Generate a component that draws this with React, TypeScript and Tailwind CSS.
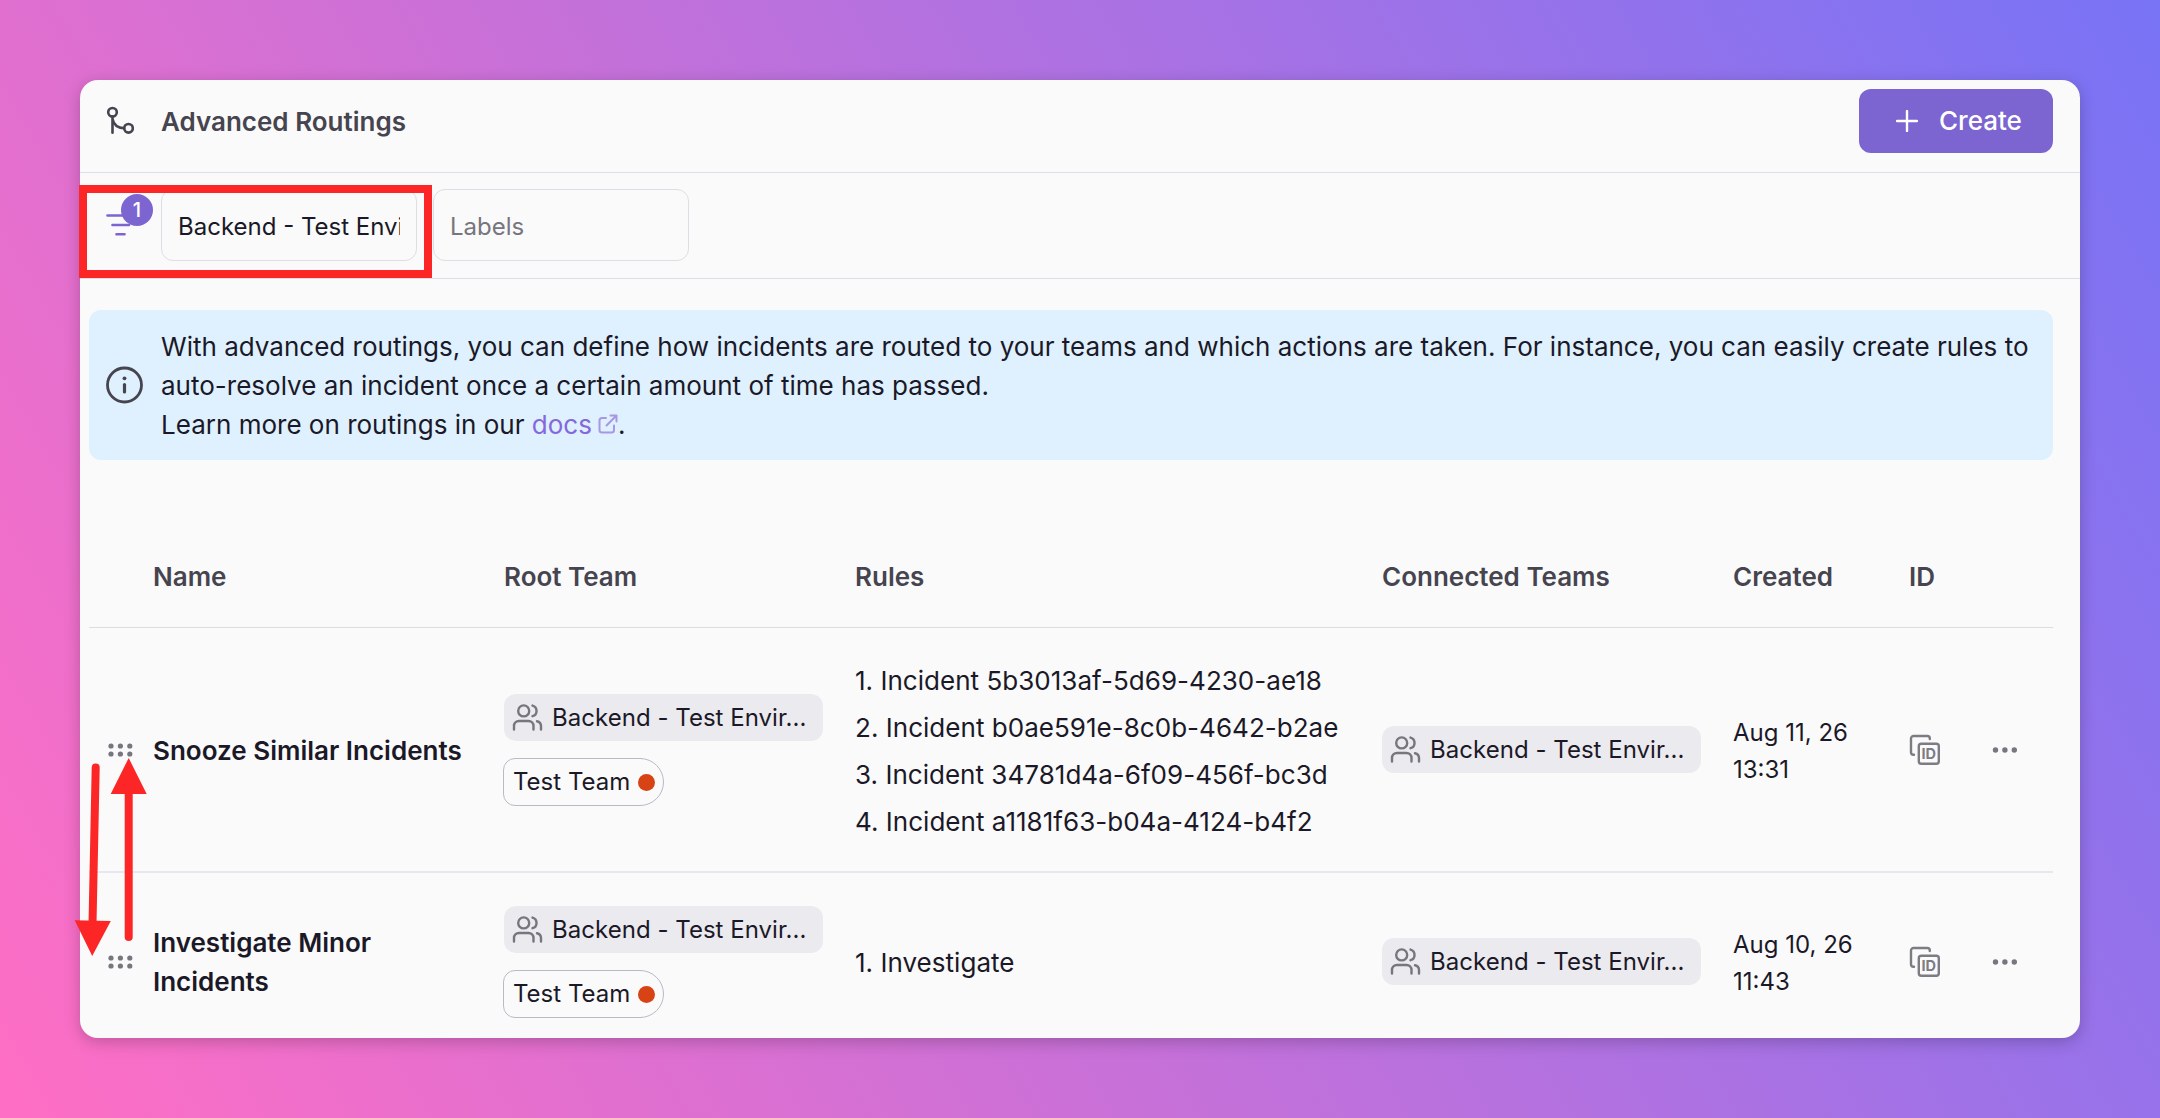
import type { ReactNode } from 'react';

type Routing = {
  name: string;
  rules: string[];
  date: string;
  time: string;
};

const routings: Routing[] = [
  {
    name: 'Snooze Similar Incidents',
    rules: [
      'Incident 5b3013af-5d69-4230-ae18',
      'Incident b0ae591e-8c0b-4642-b2ae',
      'Incident 34781d4a-6f09-456f-bc3d',
      'Incident a1181f63-b04a-4124-b4f2',
    ],
    date: 'Aug 11, 26',
    time: '13:31',
  },
  {
    name: 'Investigate Minor Incidents',
    rules: ['Investigate'],
    date: 'Aug 10, 26',
    time: '11:43',
  },
];

const columns = 'grid grid-cols-[64px_351px_351px_527px_351px_176px_144px]';

function RouteIcon() {
  return (
    <svg width="28" height="32" viewBox="0 0 28 32" fill="none" stroke="#46444f" strokeWidth="2.6" strokeLinecap="round">
      <circle cx="6.5" cy="7.3" r="4.3" />
      <circle cx="22.5" cy="23.3" r="4.3" />
      <path d="M6.5 11.6v16.2M6.5 14c1 5.5 5 8.8 11.7 9.3" />
    </svg>
  );
}

function FilterIcon() {
  return (
    <svg width="32" height="32" viewBox="0 0 32 32" fill="none" stroke="#7c65d1" strokeWidth="2.6" strokeLinecap="round">
      <path d="M4.5 6.5h24M9.5 16h16.500M13.5 25.2h8" />
    </svg>
  );
}

function InfoIcon() {
  return (
    <svg width="38" height="38" viewBox="0 0 38 38" fill="none" stroke="#46444f" strokeLinecap="round">
      <circle cx="19.5" cy="19" r="17" strokeWidth="2.8" />
      <path d="M19.5 18.5v7.5" strokeWidth="3.2" />
      <circle cx="19.5" cy="12.3" r="1.9" fill="#46444f" stroke="none" />
    </svg>
  );
}

function ExternalIcon() {
  return (
    <svg className="ml-1.5 inline-block align-baseline" width="20" height="20" viewBox="0 0 20 20" fill="none" stroke="#a896e6" strokeWidth="2" strokeLinecap="round" strokeLinejoin="round">
      <path d="M8 4H4a2.5 2.5 0 0 0-2.5 2.5V16A2.5 2.5 0 0 0 4 18.5h9.5A2.5 2.5 0 0 0 16 16v-4.5M12.5 1.5h6v6M18.5 1.5L8.5 11.5" />
    </svg>
  );
}

function TeamIcon() {
  return (
    <svg className="shrink-0" width="32" height="32" viewBox="0 0 32 32" fill="none" stroke="#77757d" strokeWidth="2.4" strokeLinecap="round" strokeLinejoin="round">
      <circle cx="11.7" cy="8.9" r="5.5" />
      <path d="M2 27.5v-3.5a5 5 0 0 1 5-5h9.5a5 5 0 0 1 5 5v3.5" />
      <path d="M20.5 3.6a5.5 5.5 0 0 1 0 10.6" />
      <path d="M25 19.3a5 5 0 0 1 4 4.8v3.4" />
    </svg>
  );
}

function CopyIdIcon() {
  return (
    <svg width="32" height="32" viewBox="0 0 32 32" fill="none" stroke="#7d7b84" strokeWidth="2.4" strokeLinecap="round">
      <path d="M5 20.8H4.5A2.5 2.5 0 0 1 2 18.3V4.5A2.5 2.5 0 0 1 4.5 2h13.8a2.5 2.5 0 0 1 2.5 2.5v.5" />
      <rect x="9.8" y="9.8" width="20" height="20" rx="2.5" />
      <text x="19.8" y="25" textAnchor="middle" fontSize="14.5" fontWeight="700" fill="#7d7b84" stroke="none">
        ID
      </text>
    </svg>
  );
}

function DragHandle() {
  return (
    <svg width="26" height="16" viewBox="0 0 26 16" fill="#77757d">
      {[4, 13.4, 22.8].map((x) => (
        <g key={x}>
          <circle cx={x} cy="4" r="2.6" />
          <circle cx={x} cy="12" r="2.6" />
        </g>
      ))}
    </svg>
  );
}

function MoreIcon() {
  return (
    <svg width="26" height="8" viewBox="0 0 26 8" fill="#77757d">
      <circle cx="3.5" cy="4" r="2.7" />
      <circle cx="12.9" cy="4" r="2.7" />
      <circle cx="22.3" cy="4" r="2.7" />
    </svg>
  );
}

function TeamChip() {
  return (
    <div className="flex h-[47px] w-[319px] items-center gap-2 rounded-xl bg-[#ebeaef] pl-2 text-2xl tracking-[0.03px]">
      <TeamIcon />
      <span className="whitespace-nowrap pt-px">Backend - Test Envir...</span>
    </div>
  );
}

function LabelChip() {
  return (
    <div className="-ml-px flex h-12 w-[161px] items-center gap-2 rounded-[12px_24px_24px_12px] border border-[#bbb8c8] pl-[9px] text-2xl">
      <span className="whitespace-nowrap">Test Team</span>
      <span className="size-[17px] rounded-full bg-[#d84315]" />
    </div>
  );
}

function HeadCell({ children }: { children?: ReactNode }) {
  return <div className="text-[26px] font-semibold text-[#46444f]">{children}</div>;
}

// Two arrows that show rows swapping places
function SwapArrows() {
  return (
    <svg className="pointer-events-none absolute -left-[10px] top-[670px]" width="90" height="220" viewBox="0 0 90 220" fill="#fc2626" stroke="#fc2626">
      <path d="M25.7 17.5L22.5 174" strokeWidth="8" strokeLinecap="round" />
      <path d="M4.7 170.2L40.8 171L22.2 206z" stroke="none" />
      <path d="M58.7 187V40" strokeWidth="8" strokeLinecap="round" />
      <path d="M40.7 44H76.7L58.7 8z" stroke="none" />
    </svg>
  );
}

export default function App() {
  return (
    <main className="h-[1118px] w-[2160px] overflow-hidden bg-[linear-gradient(60deg,#ff6ec4,#7873f5)] p-20 font-[Inter,sans-serif] text-[26.03px] text-[#1b1928]">
      <div className="relative h-[958px] w-[2000px] rounded-[18px] bg-[#fafafa] shadow-[0_4px_16px_rgba(0,0,0,0.22)]">
        <header className="flex h-[93px] items-start justify-between border-b border-[#dfdee6] pl-[26px] pr-[27px] pt-[9px]">
          <div className="flex h-16 items-center gap-[27px]">
            <RouteIcon />
            <h1 className="text-[26px] font-semibold text-[#46444f]">Advanced Routings</h1>
          </div>
          <button className="flex h-16 w-[194px] items-center rounded-xl bg-[#7c65d1] pl-[37px] font-medium text-white">
            <svg width="22" height="22" viewBox="0 0 22 22" stroke="white" strokeWidth="2.4" strokeLinecap="round">
              <path d="M11 1v20M1 11h20" />
            </svg>
            <span className="ml-[21px]">Create</span>
          </button>
        </header>

        <div className="flex h-[106px] items-start border-b border-[#dfdee6] pl-[23px] pt-4">
          <div className="relative mt-5 w-[58px]">
            <FilterIcon />
            <span className="absolute -top-[15px] left-[18px] flex size-8 items-center justify-center rounded-full bg-[#7c65d1] text-xl font-medium text-white">
              1
            </span>
          </div>
          <div className="h-[72px] w-64 rounded-xl border border-[#dfdee6] px-4">
            <div className="overflow-hidden whitespace-nowrap text-2xl leading-[73px]">Backend - Test Envir</div>
          </div>
          <div className="ml-4 h-[72px] w-64 rounded-xl border border-[#dfdee6] px-4 text-2xl leading-[73px] text-[#77757d]">
            Labels
          </div>
        </div>
        <div className="absolute -left-px top-[105px] h-[93px] w-[353px] border-8 border-[#fc2626]" />

        <div className="pl-[9px] pr-[27px] pt-[31px]">
          <div className="flex h-[150px] items-center rounded-xl bg-[#dff1fe] pl-4">
            <InfoIcon />
            <p className="ml-[18px] whitespace-nowrap leading-[39px]">
              With advanced routings, you can define how incidents are routed to your teams and which actions are taken. For instance, you can easily create rules to
              <br />
              auto-resolve an incident once a certain amount of time has passed.
              <br />
              Learn more on routings in our <a className="text-[#8468dc]">docs<ExternalIcon /></a>.
            </p>
          </div>

          <div className={`${columns} mt-[65px] h-[103px] items-center border-b border-[#dddde0]`}>
            <HeadCell />
            <HeadCell>Name</HeadCell>
            <HeadCell>Root Team</HeadCell>
            <HeadCell>Rules</HeadCell>
            <HeadCell>Connected Teams</HeadCell>
            <HeadCell>Created</HeadCell>
            <HeadCell>ID</HeadCell>
          </div>

          {routings.map((routing, i) => (
            <div
              key={routing.name}
              className={`${columns} items-center ${i === 0 ? 'h-[245px] border-b-2 border-[#e8e7ee]' : 'h-[165px] pt-3'}`}
            >
              <div className="pl-[18px]">
                <DragHandle />
              </div>
              <div className="w-[320px] pt-px font-semibold leading-[39px]">{routing.name}</div>
              <div className="flex flex-col gap-[17px] pt-px">
                <TeamChip />
                <LabelChip />
              </div>
              <ol className="pt-0.5">
                {routing.rules.map((rule, n) => (
                  <li key={rule} className="leading-[47px] tracking-[0.02px]">
                    {n + 1}. {rule}
                  </li>
                ))}
              </ol>
              <TeamChip />
              <div className="pt-0.5 text-2xl leading-[37px]">
                {routing.date}
                <br />
                {routing.time}
              </div>
              <div className="flex items-center">
                <CopyIdIcon />
                <div className="ml-[51px]">
                  <MoreIcon />
                </div>
              </div>
            </div>
          ))}
        </div>

        <SwapArrows />
      </div>
    </main>
  );
}
